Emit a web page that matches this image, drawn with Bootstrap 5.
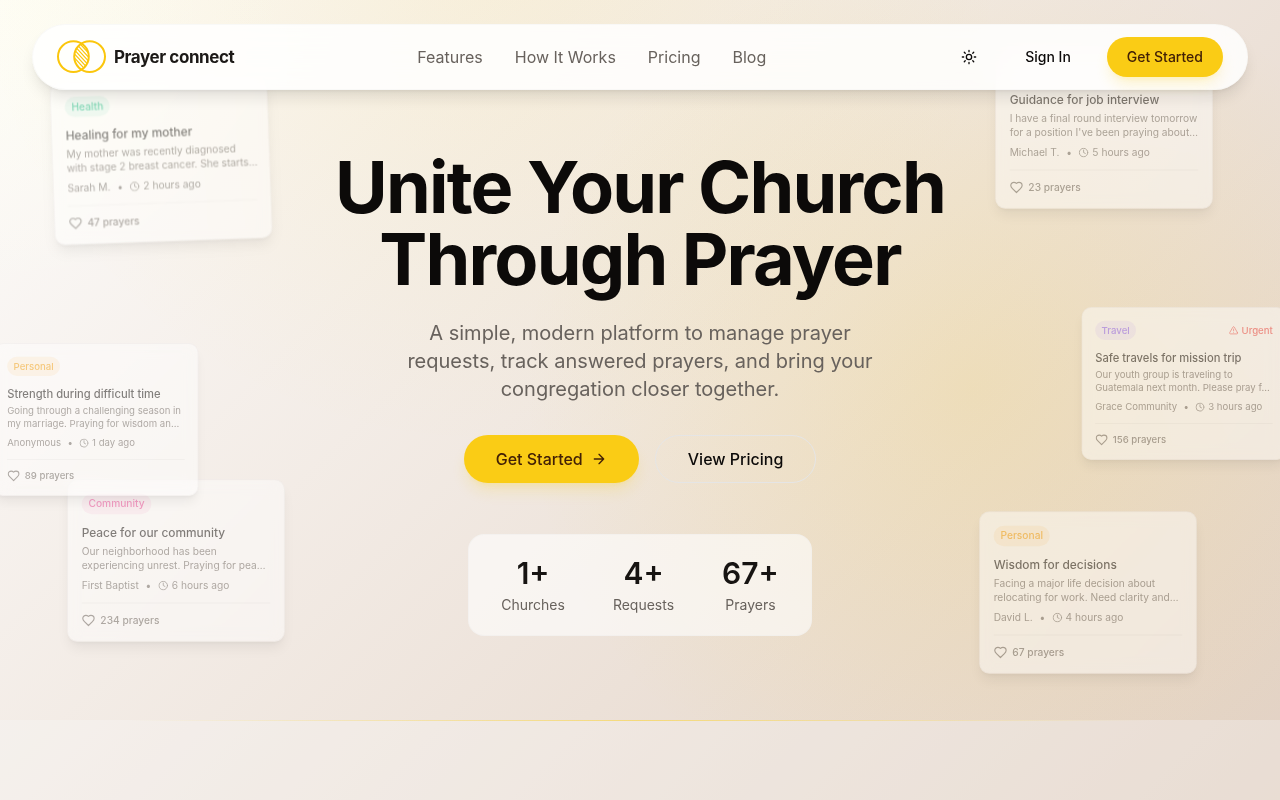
<!DOCTYPE html>
<html lang="en">
<head>
<meta charset="utf-8">
<meta name="viewport" content="width=device-width, initial-scale=1">
<title>Prayer connect</title>
<link href="https://cdn.jsdelivr.net/npm/bootstrap@5.3.0/dist/css/bootstrap.min.css" rel="stylesheet">
<style>
  :root { --ink: #0c0a09; --muted: #68625d; --sun: #facc15; --sun-ink: #422006; }
  body {
    font-family: Inter, "Liberation Sans", sans-serif;
    color: var(--ink);
    background: linear-gradient(135deg, #fdfcfb 0%, #e2d1c3 100%) no-repeat;
    min-height: 100vh;
    overflow-x: hidden;
  }
  .hero {
    min-height: 90vh;
    isolation: isolate;
    background:
      radial-gradient(circle at 76% 54%, rgba(250, 204, 21, .15), transparent 450px),
      radial-gradient(circle at 38% -10%, rgba(250, 204, 21, .1), transparent 520px),
      radial-gradient(circle at 0% 0%, rgba(255, 254, 240, .6), transparent 300px);
  }
  .site-bar {
    z-index: 5;
    margin: 24px 32px 0;
    padding: 12px 24px;
    border: 1px solid rgba(245, 245, 244, .6);
    border-radius: 33px;
    background: rgba(255, 255, 255, .85);
    backdrop-filter: blur(16px);
    box-shadow: 0 10px 15px -3px rgba(12, 10, 9, .1), 0 4px 6px -4px rgba(12, 10, 9, .1);
  }
  .brand { gap: 8px; font-size: 17px; line-height: 24px; font-weight: 700; letter-spacing: -.025em; color: #1c1917; text-decoration: none; }
  .site-links { gap: 32px; }
  .site-links a { color: var(--muted); font-size: 16px; line-height: 24px; text-decoration: none; }
  .btn { --bs-btn-border-radius: 50rem; --bs-btn-font-weight: 500; --bs-btn-color: var(--ink); border-width: 0; }
  .btn-bar { height: 40px; padding: 0 20px; font-size: 14px; line-height: 20px; }
  .btn-round { width: 40px; height: 40px; padding: 0; }
  .btn-sun, .btn-sun:hover {
    background: var(--sun); color: var(--sun-ink);
    box-shadow: 0 10px 15px -3px rgba(250, 204, 21, .2), 0 4px 6px -4px rgba(250, 204, 21, .2);
  }
  .btn-hero { height: 48px; padding: 0 32px; font-size: 16px; line-height: 24px; }
  .btn-ring { border: 1px solid #e5e5e5; }
  .headline { margin: 0 0 24px; font-size: 72px; line-height: 72px; font-weight: 700; letter-spacing: -.025em; }
  .intro { max-width: 512px; margin: 0 0 32px; font-size: 20px; line-height: 28px; color: var(--muted); }
  .hero-copy { z-index: 2; padding: 61px 16px 84px; }
  .stats {
    margin-top: 51px; padding: 20px 32px; gap: 48px;
    border: 1px solid rgba(240, 238, 236, .5); border-radius: 16px;
    background: rgba(255, 255, 255, .6);
  }
  .stat-num { font-size: 30px; line-height: 36px; font-weight: 600; margin-bottom: 4px; color: #171412; }
  .stat-label { font-size: 14px; line-height: 20px; color: var(--muted); }

  .prayer {
    position: absolute;
    width: 256px; padding: 16px;
    border: 1px solid rgba(231, 229, 228, .6); border-radius: 12px;
    background: rgba(255, 255, 255, .9);
    backdrop-filter: blur(8px);
    box-shadow: 0 10px 15px -3px rgba(0, 0, 0, .12), 0 4px 6px -4px rgba(0, 0, 0, .12);
    font-size: 12px; line-height: 16px; color: var(--muted);
    opacity: .5;
    transform: scale(.85);
  }
  .prayer-far { transform: scale(.8); z-index: 1; }
  .prayer-tilt { transform: scale(.85) rotate(-2deg); }
  .at-1 { left: 33px; top: 65px; }
  .at-2 { right: 48px; top: 32px; }
  .at-3 { left: -32px; top: 45%; }
  .at-4 { left: 48px; bottom: 64px; }
  .at-5 { right: -32px; top: 40%; }
  .at-6 { right: 64px; bottom: 32px; }
  .tag-row { height: 24px; }
  .tag { padding: 4px 8px; border-radius: 12px; font-weight: 500; }
  .tag-health { color: #10b981; background: rgba(16, 185, 129, .12); }
  .tag-personal { color: #f59e0b; background: rgba(245, 158, 11, .14); }
  .tag-community { color: #ec4899; background: rgba(236, 72, 153, .12); }
  .tag-travel { color: #8b5cf6; background: rgba(139, 92, 246, .14); }
  .urgent { gap: 4px; color: #ef4444; font-weight: 500; }
  .prayer-title { margin: 12px 0 4px; font-size: 14px; line-height: 20px; font-weight: 500; color: var(--ink); }
  .prayer-text { margin-bottom: 8px; white-space: nowrap; }
  .prayer-meta { gap: 8px; margin-bottom: 12px; }
  .prayer-foot { gap: 6px; padding-top: 12px; border-top: 1px solid rgba(12, 10, 9, .06); font-weight: 500; }
  .ico { fill: none; stroke: currentColor; stroke-width: 2; stroke-linecap: round; stroke-linejoin: round; flex: none; }

  .next-part { min-height: 10vh; background: rgba(250, 250, 249, .3); }
  .next-part::before {
    content: ""; display: block; height: 1px;
    background: linear-gradient(90deg, transparent 10%, rgba(250, 204, 21, .5) 50%, transparent 90%);
  }
</style>
</head>
<body>
<svg class="d-none" aria-hidden="true">
  <symbol id="i-clock" viewBox="0 0 24 24"><circle cx="12" cy="12" r="10"/><path d="M12 6v6l4 2"/></symbol>
  <symbol id="i-heart" viewBox="0 0 24 24"><path d="M19 14c1.49-1.46 3-3.21 3-5.5A5.5 5.5 0 0 0 16.5 3c-1.76 0-3 .5-4.5 2-1.5-1.5-2.74-2-4.5-2A5.5 5.5 0 0 0 2 8.5c0 2.3 1.5 4.05 3 5.5l7 7Z"/></symbol>
  <symbol id="i-alert" viewBox="0 0 24 24"><path d="m21.73 18-8-14a2 2 0 0 0-3.48 0l-8 14A2 2 0 0 0 4 21h16a2 2 0 0 0 1.73-3Z"/><path d="M12 9v4M12 17h.01"/></symbol>
</svg>

<section class="hero position-relative overflow-hidden d-flex flex-column">
  <header class="site-bar position-relative d-flex align-items-center justify-content-between">
    <a class="brand d-flex align-items-center" href="#">
      <svg width="49" height="34" viewBox="0 0 49 34" fill="none" stroke="#fbc60c" stroke-width="2" aria-hidden="true">
        <defs><clipPath id="lens"><path d="M24.5 3.6a15.4 15.4 0 0 1 0 26a15.4 15.4 0 0 1 0-26Z"/></clipPath></defs>
        <circle cx="16.4" cy="16.6" r="15.4"/><circle cx="32.6" cy="16.6" r="15.4"/>
        <g clip-path="url(#lens)" stroke-width="1.2"><path d="M14-10l22 24M14-6l22 24M14-2l22 24M14 2l22 24M14 6l22 24M14 10l22 24M14 14l22 24"/></g>
      </svg>
      <span>Prayer connect</span>
    </a>
    <nav class="site-links d-none d-md-flex" aria-label="Main">
      <a href="#">Features</a><a href="#">How It Works</a><a href="#">Pricing</a><a href="#">Blog</a>
    </nav>
    <div class="d-flex align-items-center gap-3">
      <button class="btn btn-round d-flex align-items-center justify-content-center" type="button" aria-label="Toggle theme">
        <svg class="ico" width="16" height="16" viewBox="0 0 24 24"><circle cx="12" cy="12" r="4"/><path d="M12 2v2M12 20v2M4.93 4.93l1.41 1.41M17.66 17.66l1.41 1.41M2 12h2M20 12h2M6.34 17.66l-1.41 1.41M19.07 4.93l-1.41 1.41"/></svg>
      </button>
      <button class="btn btn-bar" type="button">Sign In</button>
      <button class="btn btn-bar btn-sun" type="button">Get Started</button>
    </div>
  </header>

  <article class="prayer prayer-tilt at-1">
    <div class="tag-row d-flex justify-content-between align-items-center"><span class="tag tag-health">Health</span></div>
    <h2 class="prayer-title">Healing for my mother</h2>
    <div class="prayer-text">My mother was recently diagnosed<br>with stage 2 breast cancer. She starts…</div>
    <div class="prayer-meta d-flex align-items-center"><span>Sarah M.</span><span>•</span><span class="d-flex align-items-center gap-1"><svg class="ico" width="12" height="12"><use href="#i-clock"/></svg>2 hours ago</span></div>
    <div class="prayer-foot d-flex align-items-center"><svg class="ico" width="16" height="16"><use href="#i-heart"/></svg>47 prayers</div>
  </article>
  <article class="prayer at-2">
    <div class="tag-row"></div>
    <h2 class="prayer-title">Guidance for job interview</h2>
    <div class="prayer-text">I have a final round interview tomorrow<br>for a position I've been praying about…</div>
    <div class="prayer-meta d-flex align-items-center"><span>Michael T.</span><span>•</span><span class="d-flex align-items-center gap-1"><svg class="ico" width="12" height="12"><use href="#i-clock"/></svg>5 hours ago</span></div>
    <div class="prayer-foot d-flex align-items-center"><svg class="ico" width="16" height="16"><use href="#i-heart"/></svg>23 prayers</div>
  </article>
  <article class="prayer prayer-far at-3">
    <div class="tag-row d-flex justify-content-between align-items-center"><span class="tag tag-personal">Personal</span></div>
    <h2 class="prayer-title">Strength during difficult time</h2>
    <div class="prayer-text">Going through a challenging season in<br>my marriage. Praying for wisdom an…</div>
    <div class="prayer-meta d-flex align-items-center"><span>Anonymous</span><span>•</span><span class="d-flex align-items-center gap-1"><svg class="ico" width="12" height="12"><use href="#i-clock"/></svg>1 day ago</span></div>
    <div class="prayer-foot d-flex align-items-center"><svg class="ico" width="16" height="16"><use href="#i-heart"/></svg>89 prayers</div>
  </article>
  <article class="prayer at-4">
    <div class="tag-row d-flex justify-content-between align-items-center"><span class="tag tag-community">Community</span></div>
    <h2 class="prayer-title">Peace for our community</h2>
    <div class="prayer-text">Our neighborhood has been<br>experiencing unrest. Praying for pea…</div>
    <div class="prayer-meta d-flex align-items-center"><span>First Baptist</span><span>•</span><span class="d-flex align-items-center gap-1"><svg class="ico" width="12" height="12"><use href="#i-clock"/></svg>6 hours ago</span></div>
    <div class="prayer-foot d-flex align-items-center"><svg class="ico" width="16" height="16"><use href="#i-heart"/></svg>234 prayers</div>
  </article>
  <article class="prayer prayer-far at-5">
    <div class="tag-row d-flex justify-content-between align-items-center"><span class="tag tag-travel">Travel</span><span class="urgent d-flex align-items-center"><svg class="ico" width="12" height="12"><use href="#i-alert"/></svg>Urgent</span></div>
    <h2 class="prayer-title">Safe travels for mission trip</h2>
    <div class="prayer-text">Our youth group is traveling to<br>Guatemala next month. Please pray f…</div>
    <div class="prayer-meta d-flex align-items-center"><span>Grace Community</span><span>•</span><span class="d-flex align-items-center gap-1"><svg class="ico" width="12" height="12"><use href="#i-clock"/></svg>3 hours ago</span></div>
    <div class="prayer-foot d-flex align-items-center"><svg class="ico" width="16" height="16"><use href="#i-heart"/></svg>156 prayers</div>
  </article>
  <article class="prayer at-6">
    <div class="tag-row d-flex justify-content-between align-items-center"><span class="tag tag-personal">Personal</span></div>
    <h2 class="prayer-title">Wisdom for decisions</h2>
    <div class="prayer-text">Facing a major life decision about<br>relocating for work. Need clarity and…</div>
    <div class="prayer-meta d-flex align-items-center"><span>David L.</span><span>•</span><span class="d-flex align-items-center gap-1"><svg class="ico" width="12" height="12"><use href="#i-clock"/></svg>4 hours ago</span></div>
    <div class="prayer-foot d-flex align-items-center"><svg class="ico" width="16" height="16"><use href="#i-heart"/></svg>67 prayers</div>
  </article>

  <div class="hero-copy position-relative d-flex flex-column align-items-center text-center">
    <h1 class="headline">Unite Your Church<br>Through Prayer</h1>
    <p class="intro">A simple, modern platform to manage prayer requests, track answered prayers, and bring your congregation closer together.</p>
    <div class="d-flex flex-wrap justify-content-center gap-3">
      <button class="btn btn-hero btn-sun d-flex align-items-center gap-2" type="button">Get Started
        <svg class="ico" width="16" height="16" viewBox="0 0 24 24"><path d="M5 12h14M12 5l7 7-7 7"/></svg>
      </button>
      <button class="btn btn-hero btn-ring" type="button">View Pricing</button>
    </div>
    <div class="stats d-flex">
      <div><div class="stat-num">1+</div><div class="stat-label">Churches</div></div>
      <div><div class="stat-num">4+</div><div class="stat-label">Requests</div></div>
      <div><div class="stat-num">67+</div><div class="stat-label">Prayers</div></div>
    </div>
  </div>
</section>
<section class="next-part" aria-label="Features"></section>
<script src="https://cdn.jsdelivr.net/npm/bootstrap@5.3.0/dist/js/bootstrap.bundle.min.js"></script>
</body>
</html>
